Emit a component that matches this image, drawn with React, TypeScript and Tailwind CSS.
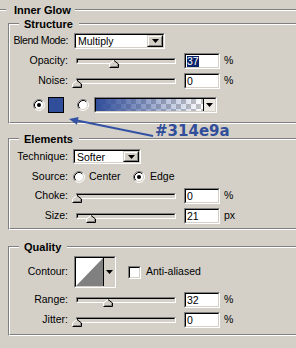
import React from 'react';

const Sunken: React.FC<{ className?: string; inner?: string; children?: React.ReactNode }> = ({ className = '', inner = '', children }) => (
  <div className={`border border-t-[#808080] border-l-[#808080] border-r-white border-b-white ${className}`}>
    <div className={`h-full border border-t-black border-l-black border-r-[#d4d0c8] border-b-[#d4d0c8] ${inner}`}>{children}</div>
  </div>
);

const Tri = () => (
  <svg width="7" height="4" viewBox="0 0 7 4">
    <path d="M0 0H7L3.5 4Z" fill="#000" />
  </svg>
);

const DropBtn = () => (
  <div className="w-[16px] h-full border border-t-[#d4d0c8] border-l-[#d4d0c8] border-r-black border-b-black">
    <div className="h-full flex items-center justify-center bg-[#d4d0c8] border border-t-white border-l-white border-r-[#808080] border-b-[#808080]">
      <Tri />
    </div>
  </div>
);

const Combo: React.FC<{ value: string; className?: string }> = ({ value, className = '' }) => (
  <Sunken className={className} inner="flex bg-white">
    <span className="flex-1 pl-[2px] leading-[12px]">{value}</span>
    <DropBtn />
  </Sunken>
);

const Label: React.FC<{ children: React.ReactNode; className?: string }> = ({ children, className = '' }) => (
  <span className={`w-[58px] shrink-0 flex justify-end whitespace-nowrap ${className}`}>{children}</span>
);

const Radio: React.FC<{ checked?: boolean; className?: string }> = ({ checked, className = '' }) => (
  <svg width="12" height="12" viewBox="0 0 12 12" className={`shrink-0 ${className}`}>
    <circle cx="6" cy="6" r="5" fill="#fff" />
    <path d="M2.11 9.89A5.5 5.5 0 0 1 9.89 2.11" stroke="#808080" fill="none" />
    <path d="M9.89 2.11A5.5 5.5 0 0 1 2.11 9.89" stroke="#fff" fill="none" />
    <path d="M2.82 9.18A4.5 4.5 0 0 1 9.18 2.82" stroke="#000" fill="none" />
    <path d="M9.18 2.82A4.5 4.5 0 0 1 2.82 9.18" stroke="#d4d0c8" fill="none" />
    {checked && <circle cx="6" cy="6" r="2" fill="#000" />}
  </svg>
);

const Thumb = () => (
  <svg width="10" height="8" viewBox="0 0 10 8">
    <path d="M0.5 7.5V4L5 0.5L9.5 4V7.5Z" fill="#d4d0c8" />
    <path d="M0.5 7.5V4L5 0.5" stroke="#fff" fill="none" />
    <path d="M5 0.5L9.5 4V7.5H0.5" stroke="#000" fill="none" />
    <path d="M8.5 4.5V6.5H1.5" stroke="#808080" fill="none" />
  </svg>
);

const SliderRow: React.FC<{ label: string; value: string; unit: string; thumb: number; selected?: boolean; className?: string }> = ({
  label,
  value,
  unit,
  thumb,
  selected,
  className = '',
}) => (
  <div className={`flex items-center h-[16px] ${className}`}>
    <Label>{label}</Label>
    <div className="relative ml-[8px] w-[100px] h-[16px]">
      <div className="mt-[5px] h-[6px] border border-t-[#808080] border-l-[#808080] border-r-white border-b-white">
        <div className="h-full border border-t-black border-l-black border-r-[#d4d0c8] border-b-[#d4d0c8]" />
      </div>
      <div className="absolute top-[7px] h-[8px] flex" style={{ left: thumb }}>
        <Thumb />
      </div>
    </div>
    <Sunken className="ml-[8px] w-[36px] h-[16px]" inner="bg-white flex items-center pl-[1px]">
      <span className={`leading-[11px] ${selected ? 'bg-[#0a246a] text-white' : ''}`}>{value}</span>
    </Sunken>
    <span className="ml-[4px]">{unit}</span>
  </div>
);

const Group: React.FC<{ title: string; className?: string; children?: React.ReactNode }> = ({ title, className = '', children }) => (
  <div className={`ml-[8px] border-t border-l border-b border-t-[#808080] border-l-[#808080] border-b-white ${className}`}>
    <div className="h-full flex flex-col border-t border-l border-b border-t-white border-l-white border-b-[#808080]">
      <div className="-mt-[8px] ml-[9px] w-fit bg-[#d4d0c8] pl-[5px] pr-[6px] text-[11px] font-bold leading-[14px]">{title}</div>
      {children}
    </div>
  </div>
);

export default function App() {
  return (
    <div className="relative w-[296px] h-[348px] overflow-hidden bg-[#d4d0c8] font-['Liberation_Sans',Arial,sans-serif] text-[10.5px] text-black">
      <div className="mt-[9px] border-t border-t-[#808080]">
        <div className="border-t border-t-white">
          <div className="-mt-[8px] ml-[6px] w-fit bg-[#d4d0c8] pl-[8px] pr-[4px] text-[11px] font-bold leading-[14px]">Inner Glow</div>

          <Group title="Structure" className="mt-[6px] h-[101px]">
            <div className="mt-[2px] flex items-center h-[16px]">
              <Label className="tracking-[-0.4px]">Blend Mode:</Label>
              <Combo value="Multiply" className="ml-[6px] w-[91px] h-[16px]" />
            </div>
            <SliderRow className="mt-[4px]" label="Opacity:" value="37" unit="%" thumb={33} selected />
            <SliderRow className="mt-[4px]" label="Noise:" value="0" unit="%" thumb={-4} />
            <div className="mt-[8px] flex items-center h-[16px]">
              <Radio checked className="ml-[23px]" />
              <div className="ml-[3px] w-[16px] h-[16px] border border-black bg-[#314e9a]" />
              <Radio className="ml-[13px]" />
              <Sunken className="ml-[5px] w-[123px] h-[16px]" inner="flex">
                <div className="flex-1 bg-[linear-gradient(to_right,#314e9a,#314e9a00),repeating-conic-gradient(#c4c4c4_0%_25%,#ffffff_0%_50%)] bg-[length:auto,10px_10px]" />
                <div className="w-[12px] flex items-center justify-center border-l border-l-black bg-[#ece9e4]">
                  <Tri />
                </div>
              </Sunken>
            </div>
          </Group>

          <div className="h-[14px] pl-[155px] font-['DejaVu_Sans',sans-serif] text-[15px] font-bold leading-[14px] text-[#314e9a]">#314e9a</div>

          <Group title="Elements" className="h-[92px]">
            <div className="mt-[3px] flex items-center h-[15px]">
              <Label>Technique:</Label>
              <Combo value="Softer" className="ml-[5px] w-[68px] h-[15px]" />
            </div>
            <div className="mt-[5px] flex items-center h-[16px]">
              <Label>Source:</Label>
              <Radio className="ml-[5px]" />
              <span className="ml-[4px] w-[40px]">Center</span>
              <Radio checked className="ml-[4px]" />
              <span className="ml-[5px]">Edge</span>
            </div>
            <SliderRow className="mt-[3px]" label="Choke:" value="0" unit="%" thumb={-4} />
            <SliderRow className="mt-[4px]" label="Size:" value="21" unit="px" thumb={10} />
          </Group>

          <Group title="Quality" className="mt-[16px] h-[90px]">
            <div className="mt-[2px] flex items-center h-[32px]">
              <Label>Contour:</Label>
              <Sunken className="ml-[6px] w-[42px] h-[32px]" inner="flex">
                <svg width="27" height="28" viewBox="0 0 27 28" className="bg-white">
                  <path d="M0 28L27 0V28Z" fill="#808080" />
                </svg>
                <div className="flex-1 flex items-start justify-center pt-[12px] border-l border-l-black bg-[#d4d0c8]">
                  <Tri />
                </div>
              </Sunken>
              <Sunken className="ml-[12px] w-[13px] h-[13px]" inner="bg-white" />
              <span className="ml-[5px]">Anti-aliased</span>
            </div>
            <SliderRow className="mt-[4px]" label="Range:" value="32" unit="%" thumb={27} />
            <SliderRow className="mt-[4px]" label="Jitter:" value="0" unit="%" thumb={-4} />
          </Group>
        </div>
      </div>

      <svg className="absolute left-0 top-0 pointer-events-none" width="296" height="348" viewBox="0 0 296 348">
        <line x1="77" y1="120.6" x2="153" y2="136" stroke="#3452a3" strokeWidth="2" />
        <path d="M69 119L78.6 116.9L77 124.7Z" fill="#3452a3" />
      </svg>
    </div>
  );
}
